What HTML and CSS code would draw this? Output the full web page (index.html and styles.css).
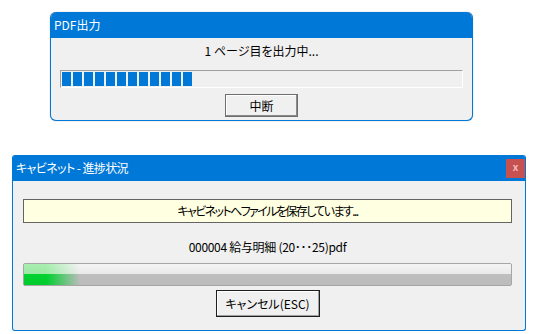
FILE: index.html
```html
<!DOCTYPE html>
<html>
<head>
  <meta charset="utf-8">
  <link rel="stylesheet" href="styles.css">
</head>
<body>
  <div class="window window-pdf">
    <div class="titlebar">
      <span class="title">PDF出力</span>
    </div>
    <div class="window-body">
      <div class="message">1 ページ目を出力中...</div>
      <div class="block-progress">
        <div class="block-fill" style="width: 130px"></div>
      </div>
      <button class="btn btn-pdf">中断</button>
    </div>
  </div>

  <div class="window window-cabinet">
    <div class="titlebar">
      <span class="title title-cabinet">キャビネット - 進捗状況</span>
      <span class="close">x</span>
    </div>
    <div class="window-body cabinet-body">
      <div class="notice">キャビネットへファイルを保存しています...</div>
      <div class="filename">000004 給与明細 (20･･･25)pdf</div>
      <div class="bar-progress">
        <div class="bar-fill" style="width: 56px"></div>
      </div>
      <button class="btn btn-cancel">キャンセル(ESC)</button>
    </div>
  </div>
</body>
</html>
```

FILE: styles.css
```css
body {
  margin: 0;
  padding-top: 12px;
  background: #ffffff;
  font-family: "Noto Sans CJK JP", "Liberation Sans", sans-serif;
  font-size: 12px;
  font-feature-settings: "palt";
  color: #000000;
}
.window {
  display: flex;
  flex-direction: column;
  background: #f0f0f0;
  border: 1px solid #0078d7;
  border-top: none;
  box-sizing: border-box;
  overflow: hidden;
}
.window-pdf {
  width: 423px;
  height: 109px;
  margin-left: 50px;
  border-radius: 6px;
  box-shadow: 0 0 1px #7a7a7a;
}
.window-cabinet {
  width: 514px;
  height: 176px;
  margin-left: 12px;
  margin-top: 34px;
  border-radius: 3px;
}
.titlebar {
  display: flex;
  align-items: center;
  justify-content: space-between;
  height: 26px;
  flex-shrink: 0;
  background: #0078d7;
  color: #ffffff;
  padding-left: 4px;
  margin: 0 -1px;
}
.title {
  line-height: 26px;
}
.title-cabinet {
  letter-spacing: -0.6px;
}
.close {
  width: 19px;
  height: 19px;
  margin-right: 1px;
  background: #c75050;
  color: #f3c0c0;
  font-family: "Liberation Sans", sans-serif;
  font-size: 10px;
  font-weight: bold;
  line-height: 17px;
  text-align: center;
}
.window-body {
  display: flex;
  flex-direction: column;
  align-items: center;
  padding: 5px 9px 0;
}
.message {
  line-height: 16px;
}
.block-progress {
  align-self: stretch;
  height: 18px;
  margin-top: 11px;
  box-sizing: border-box;
  padding: 1px;
  border: 1px solid #ffffff;
  border-top-color: #a0a0a0;
  border-left-color: #a0a0a0;
}
.block-fill {
  height: 14px;
  background: repeating-linear-gradient(to right, #0078d7 0 9px, transparent 9px 11px);
}
.btn {
  font: inherit;
  color: #000000;
  padding: 0;
  background: #f0f0f0;
  box-sizing: border-box;
}
.btn-pdf {
  width: 73px;
  height: 23px;
  margin-top: 6px;
  border: 1px solid #6e6e6e;
  box-shadow: inset -1px -1px #8a8a8a, inset 1px 1px #ffffff;
}
.cabinet-body {
  padding: 18px 13px 0 10px;
}
.notice {
  align-self: stretch;
  height: 24px;
  box-sizing: border-box;
  border: 1px solid #646464;
  background: #ffffe1;
  text-align: center;
  line-height: 22px;
  letter-spacing: -1.6px;
}
.filename {
  margin-top: 16px;
  line-height: 16px;
  font-feature-settings: normal;
  letter-spacing: -0.3px;
}
.bar-progress {
  align-self: stretch;
  height: 23px;
  margin-top: 8px;
  box-sizing: border-box;
  border: 1px solid #a6a6a6;
  border-radius: 2px;
  background: linear-gradient(to bottom, #f4f4f4 0, #e9e9e9 50%, #bebebe 50%, #bcbcbc 100%);
}
.bar-fill {
  height: 100%;
  background: linear-gradient(to bottom, #a8eeb0 0, #9ce8a4 50%, #00d230 50%, #00cc2c 100%);
  -webkit-mask-image: linear-gradient(to right, #000 40%, transparent 100%);
  mask-image: linear-gradient(to right, #000 40%, transparent 100%);
}
.btn-cancel {
  width: 104px;
  height: 27px;
  margin-top: 4px;
  border: 1px solid #1e1e1e;
  box-shadow: inset -1px -1px #a0a0a0, inset 1px 1px #ffffff;
}
```
